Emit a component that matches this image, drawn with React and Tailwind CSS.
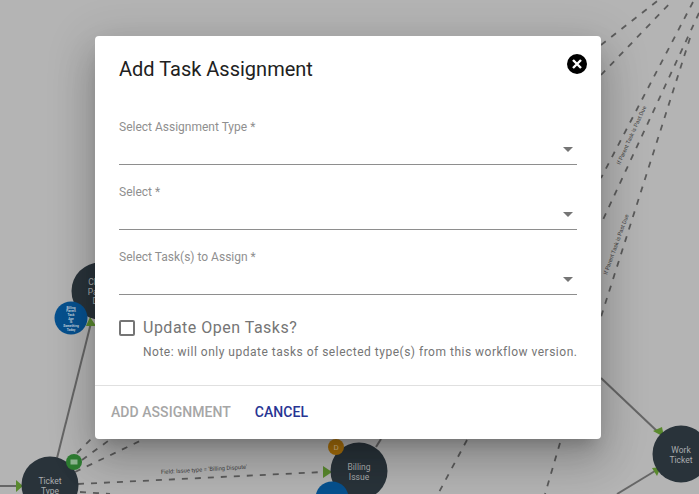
const font = { fontFamily: "Roboto, sans-serif" };

function Dash({ d }) {
  return <path d={d} fill="none" stroke="#5c5c5c" strokeWidth="1.8" strokeDasharray="6 7" />;
}
function Solid({ d }) {
  return <path d={d} fill="none" stroke="#666666" strokeWidth="2" />;
}
function Node({ x, y, r = 28.5, lines, top = -1, step = 9.5 }) {
  return (
    <g>
      <circle cx={x} cy={y} r={r} fill="#29333a" />
      {lines.map((l, i) => (
        <text key={i} x={x} y={y + top + i * step} textAnchor="middle" fontSize="8.5" fill="#a9adaf" fontFamily="Roboto, sans-serif">{l}</text>
      ))}
    </g>
  );
}

function Graph() {
  const tiny = ["Billing", "Parent", "Task", "Age", "Is", "Something", "Today"];
  return (
    <svg className="absolute inset-0" width="699" height="494" viewBox="0 0 699 494">
      <Dash d="M601 45L656 2L660 -1" />
      <Dash d="M601 75L673 0" />
      <Dash d="M693 2L601 178" />
      <Dash d="M699 13L601 224" />
      <Dash d="M690 38L600 320" />
      <Dash d="M560 443L545 494" />
      <Dash d="M467 440L438 494" />
      <Solid d="M601 378L658 432" />
      <Solid d="M617 494L655 471" />
      <Solid d="M376 447L381 439" />
      <Solid d="M57 458L91 323" />
      <Solid d="M0 486L18 486" />
      <Dash d="M77 453L95 435" />
      <Dash d="M82 460L108 441" />
      <Dash d="M75 472L140 441" />
      <Dash d="M78 484L323 472" />
      <Dash d="M80 492L110 494" />
      <polygon points="16,480 16,492 23,486" fill="#5a8a2e" />
      <polygon points="86,326 96,326 90,317" fill="#5a8a2e" />
      <polygon points="323,466 323,478 332,472" fill="#5a8a2e" />
      <polygon points="653,431 662,427 664,437" fill="#5a8a2e" />
      <polygon points="652,468 661,467 657,476" fill="#5a8a2e" />
      <Node x={100} y={291} lines={["Check", "Parent", "Due"]} top={-6} />
      <circle cx={71} cy={318} r={16.5} fill="#07518f" />
      {tiny.map((t, i) => (
        <text key={i} x={71} y={308.5 + i * 3.7} textAnchor="middle" fontSize="3.2" fontWeight="700" fill="#c4d2de" fontFamily="Roboto, sans-serif">{t}</text>
      ))}
      <Node x={50} y={485} lines={["Ticket", "Type"]} />
      <circle cx={74} cy={462} r={8} fill="#2e7d32" />
      <rect x={70.5} y={459.5} width={7} height={5} fill="#8fb892" />
      <Node x={359} y={471} lines={["Billing", "Issue"]} />
      <circle cx={336} cy={447} r={8} fill="#a86f0b" />
      <text x={336} y={450} textAnchor="middle" fontSize="8" fill="#d8bd8a" fontFamily="Roboto, sans-serif">D</text>
      <circle cx={332} cy={498} r={16.5} fill="#07518f" />
      <Node x={681} y={454} lines={["Work", "Ticket"]} />
      <text transform="translate(161 474) rotate(-3.5)" fontSize="5.8" fill="#444" fontFamily="Roboto, sans-serif">Field: Issue type = 'Billing Dispute'</text>
      <text transform="translate(620 165) rotate(-65.5)" fontSize="5.6" fill="#444" fontFamily="Roboto, sans-serif">If Parent Task is Past Due</text>
      <text transform="translate(607 275) rotate(-70)" fontSize="5.6" fill="#444" fontFamily="Roboto, sans-serif">If Parent Task is Past Due</text>
    </svg>
  );
}

function SelectField({ label }) {
  return (
    <div className="h-[65px] shrink-0 flex flex-col">
      <div className="h-[49px] shrink-0 pt-[19px] text-[12px] leading-[16px] text-[#8f8f8f]">{label}</div>
      <div className="h-[16px] shrink-0 border-b border-[#8e8e8e] flex justify-end pr-[4px]">
        <svg width="10" height="5" viewBox="0 0 10 5" className="-mt-[2px]"><path d="M0 0L10 0L5 5Z" fill="#757575" /></svg>
      </div>
    </div>
  );
}

export default function App() {
  return (
    <div className="relative w-[699px] h-[494px] overflow-hidden bg-[#b4b4b4]" style={font}>
      <Graph />
      <div className="absolute left-[95px] top-[36px] w-[506px] h-[403px] bg-white rounded-[4px] flex flex-col shadow-[0_11px_15px_-7px_rgba(0,0,0,0.2),0_24px_38px_3px_rgba(0,0,0,0.14),0_9px_46px_8px_rgba(0,0,0,0.12)]">
        <div className="flex justify-between shrink-0 pl-[24px] pr-[14px] pt-[19px] h-[64px]">
          <h2 className="text-[20px] leading-[28px] text-[#212121] font-normal">Add Task Assignment</h2>
          <svg width="20" height="20" viewBox="0 0 20 20" className="-mt-[1px]">
            <circle cx="10" cy="10" r="10" fill="#000" />
            <path d="M6 6L14 14M14 6L6 14" stroke="#fff" strokeWidth="2.4" />
          </svg>
        </div>
        <div className="flex flex-col shrink-0 px-[24px]">
          <SelectField label="Select Assignment Type *" />
          <SelectField label="Select *" />
          <SelectField label="Select Task(s) to Assign *" />
        </div>
        <div className="flex items-start shrink-0 gap-[8px] pl-[24px] pt-[25px]">
          <div className="w-[16px] h-[16px] border-2 border-[#757575] rounded-[2px]" />
          <div className="flex flex-col">
            <span className="text-[16px] leading-[16px] tracking-[0.5px] text-[#757575]">Update Open Tasks?</span>
            <span className="text-[12px] leading-[16px] tracking-[0.5px] text-[#757575] mt-[8px]">Note: will only update tasks of selected type(s) from this workflow version.</span>
          </div>
        </div>
        <div className="mt-[25px] shrink-0 border-t border-[#e0e0e0] flex items-center gap-[24px] pl-[16px] h-[54px]">
          <span className="text-[14px] font-medium text-[#a6a6a6] tracking-[0.05px]">ADD ASSIGNMENT</span>
          <span className="text-[14px] font-medium text-[#283593] tracking-[0.05px]">CANCEL</span>
        </div>
      </div>
    </div>
  );
}
